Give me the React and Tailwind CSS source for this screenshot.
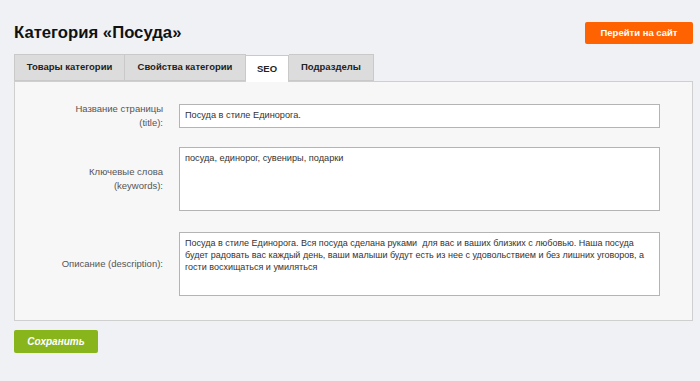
import React from 'react';

const tabs = [
    { label: 'Товары категории', w: 'w-[111px]' },
    { label: 'Свойства категории', w: 'w-[121px]' },
    { label: 'SEO', w: 'w-[43px]', active: true },
    { label: 'Подразделы', w: 'w-[85px]' },
];

const description =
    'Посуда в стиле Единорога. Вся посуда сделана руками  для вас и ваших близких с любовью. Наша посуда будет радовать вас каждый день, ваши малыши будут есть из нее с удовольствием и без лишних уговоров, а гости восхищаться и умиляться';

function Field({ label, children, className }) {
    return (
        <div className={`flex items-center ${className || ''}`}>
            <div className="w-[164px] pr-[16px] text-right text-[9.5px] leading-[14px] text-[#555]">{label}</div>
            {children}
        </div>
    );
}

export default function App() {
    return (
        <div className="w-[700px] h-[381px] bg-[#f0f1f5] pl-[14px] pr-[7px] pt-[22px] font-['Liberation_Sans',Arial,sans-serif]">
            {/* Header */}
            <div className="flex items-center justify-between h-[22px]">
                <h1 className="text-[16.7px] font-bold text-[#111] leading-none">Категория «Посуда»</h1>
                <button className="w-[108px] h-[22px] rounded-[2px] bg-[#ff6200] text-white text-[9.5px] font-bold">
                    Перейти на сайт
                </button>
            </div>

            {/* Tabs */}
            <div className="flex mt-[10px] h-[27px]">
                {tabs.map((tab, i) => (
                    <div
                        key={tab.label}
                        className={`${tab.w} flex items-center justify-center text-[9.5px] font-bold text-[#222] border-t border-r border-[#c9c9c9] ${i === 0 ? 'border-l' : ''} ${tab.active ? 'bg-white relative top-[1px] h-[27px]' : 'bg-[#dcdcdc] border-b'}`}
                    >
                        {tab.label}
                    </div>
                ))}
            </div>

            {/* Panel */}
            <div className="h-[240px] border border-[#cfcfcf] bg-[#f7f7f7] pt-[20px]">
                <Field label={<>Название страницы<br />(title):</>}>
                    <div className="w-[481px] h-[24px] bg-white border border-[#b4b4b4] px-[5px] flex items-center text-[9.2px] text-[#333]">
                        Посуда в стиле Единорога.
                    </div>
                </Field>

                <Field label={<>Ключевые слова<br />(keywords):</>} className="mt-[17px]">
                    <div className="w-[481px] h-[64px] bg-white border border-[#b4b4b4] px-[5px] pt-[4px] text-[9.2px] leading-[12px] text-[#333]">
                        посуда, единорог, сувениры, подарки
                    </div>
                </Field>

                <Field label="Описание (description):" className="mt-[21px]">
                    <div className="w-[481px] h-[64px] bg-white border border-[#b4b4b4] pl-[5px] pr-[6px] pt-[4px] text-[9px] leading-[12px] text-[#333] whitespace-pre-wrap">
                        {description}
                    </div>
                </Field>
            </div>

            {/* Save */}
            <button className="mt-[9px] w-[84px] h-[23px] rounded-[2px] bg-[#88b41c] text-white text-[10px] font-bold italic">
                Сохранить
            </button>
        </div>
    );
}
